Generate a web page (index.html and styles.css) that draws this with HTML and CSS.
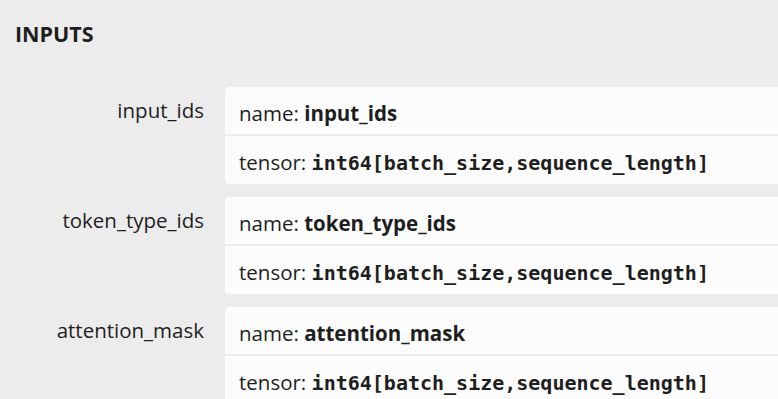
FILE: index.html
```html
<!DOCTYPE html>
<html>
<head>
<meta charset="utf-8">
<link rel="stylesheet" href="styles.css">
</head>
<body>
<div class="section">
  <div class="section-title">INPUTS</div>
  <div class="items">
    <div class="item">
      <div class="label">input_ids</div>
      <div class="card">
        <div class="row">name: <b>input_ids</b></div>
        <div class="row">tensor: <code>int64[batch_size,sequence_length]</code></div>
      </div>
    </div>
    <div class="item">
      <div class="label">token_type_ids</div>
      <div class="card">
        <div class="row">name: <b>token_type_ids</b></div>
        <div class="row">tensor: <code>int64[batch_size,sequence_length]</code></div>
      </div>
    </div>
    <div class="item">
      <div class="label">attention_mask</div>
      <div class="card">
        <div class="row">name: <b>attention_mask</b></div>
        <div class="row">tensor: <code>int64[batch_size,sequence_length]</code></div>
      </div>
    </div>
  </div>
</div>
</body>
</html>
```
FILE: styles.css
```css
html, body {
  margin: 0;
  padding: 0;
  background: #ececec;
  overflow: hidden;
}
body {
  font-family: "Open Sans", "Noto Sans", sans-serif;
  font-size: 20.5px;
  color: #1e1e1e;
}
.section {
  padding: 20px 0 0 15px;
}
.section-title {
  font-weight: 700;
  font-size: 21.5px;
  line-height: 28px;
}
.items {
  margin-top: 39px;
  display: flex;
  flex-direction: column;
  gap: 13px;
}
.item {
  display: grid;
  grid-template-columns: 189px 820px;
  column-gap: 21px;
}
.label {
  text-align: right;
  padding-top: 9px;
  line-height: 28px;
  white-space: nowrap;
}
.card {
  background: #fcfcfc;
  border-radius: 4px;
  display: flex;
  flex-direction: column;
}
.row {
  height: 47px;
  box-sizing: border-box;
  padding: 12px 14px 0;
  line-height: 28px;
  white-space: nowrap;
}
.row + .row {
  border-top: 2px solid #ececec;
  height: 50px;
}
b {
  font-weight: 700;
}
code {
  font-family: "DejaVu Sans Mono", monospace;
  font-weight: 700;
  font-size: 20px;
}
```
